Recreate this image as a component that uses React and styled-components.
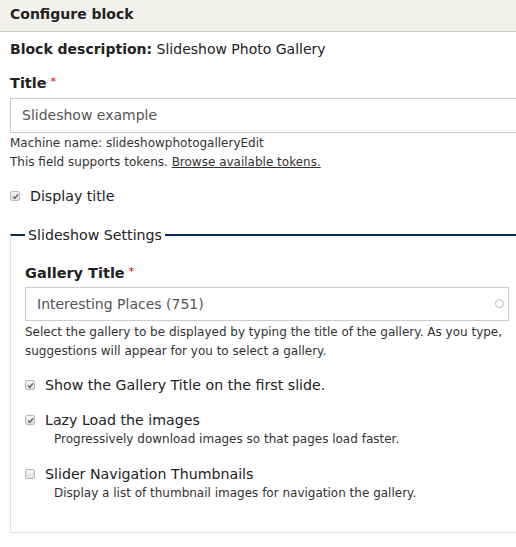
import React from "react";
import styled, { createGlobalStyle } from "styled-components";

const GlobalStyle = createGlobalStyle`
  html, body {
    margin: 0;
    padding: 0;
    background: #fff;
    overflow: hidden;
  }
  body {
    font-family: "DejaVu Sans", Verdana, sans-serif;
    color: #333;
  }
`;

const Page = styled.div`
  width: 540px;
`;

const Header = styled.div`
  height: 31px;
  line-height: 29px;
  padding: 0 10px;
  background: #f2f1ed;
  border-bottom: 1px solid #ccc;
  font-size: 14px;
  font-weight: bold;
  color: #222;
`;

const Body = styled.div`
  padding: 7px 16px 20px 10px;
`;

const Description = styled.div`
  font-size: 14px;
  line-height: 20px;
  color: #222;
  b {
    font-weight: bold;
  }
`;

const Label = styled.div`
  margin-top: ${(p) => p.$top ?? 13}px;
  font-size: 14.5px;
  line-height: 20px;
  font-weight: bold;
  color: #222;
`;

const Required = styled.span`
  color: #e00;
  font-size: 11px;
  font-weight: normal;
  margin-left: 4px;
  vertical-align: 3px;
`;

const TextInput = styled.div`
  position: relative;
  margin-top: ${(p) => p.$top ?? 5}px;
  height: ${(p) => p.$height || 33}px;
  border: 1px solid #ccc;
  padding-left: 11px;
  font-size: 14px;
  line-height: ${(p) => p.$height || 33}px;
  color: #555;
  background: #fff;
`;

const Throbber = styled.span`
  position: absolute;
  right: 4px;
  top: 50%;
  width: 7px;
  height: 7px;
  margin-top: -5px;
  border: 1.5px solid #bbb;
  border-radius: 50%;
`;

const Help = styled.div`
  font-size: 12px;
  line-height: 19px;
  color: #333;
  margin-top: ${(p) => p.$top || 0}px;
  padding-left: ${(p) => p.$indent || 0}px;
  a {
    color: #333;
    text-decoration: underline;
  }
`;

const CheckRow = styled.label`
  display: flex;
  align-items: center;
  margin-top: ${(p) => p.$top ?? 14}px;
  font-size: 14.2px;
  line-height: 20px;
  color: #222;
`;

const Box = styled.span`
  flex: none;
  width: 8px;
  height: 8px;
  margin-right: 10px;
  border: 1px solid #b8b8b8;
  border-radius: 2px;
  background: linear-gradient(#f6f6f6, #dedede);
  display: flex;
  align-items: center;
  justify-content: center;
`;

const Fieldset = styled.fieldset`
  margin: 19px 0 0 0;
  padding: 17px 14px 29px 14px;
  border: 1px solid #e2e2e2;
  border-top: 2px solid #0a2a5c;
  min-width: 0;
`;

const Legend = styled.legend`
  padding: 0 3px;
  margin-left: 0;
  font-size: 14.2px;
  line-height: 20px;
  color: #222;
`;

function Checkbox({ checked }) {
  return (
    <Box>
      {checked && (
        <svg width="7" height="7" viewBox="0 0 7 7">
          <path d="M1 3.6 L2.8 5.3 L6 1.4" fill="none" stroke="#555" strokeWidth="1.3" />
        </svg>
      )}
    </Box>
  );
}

function Option({ checked, label, help, top }) {
  return (
    <>
      <CheckRow $top={top}>
        <Checkbox checked={checked} />
        {label}
      </CheckRow>
      {help && <Help $indent={29}>{help}</Help>}
    </>
  );
}

export default function App() {
  return (
    <Page>
      <GlobalStyle />
      <Header>Configure block</Header>
      <Body>
        <Description>
          <b>Block description:</b> Slideshow Photo Gallery
        </Description>
        <Label>
          Title<Required>*</Required>
        </Label>
        <TextInput $height={33}>Slideshow example</TextInput>
        <Help $top={1}>Machine name: slideshowphotogalleryEdit</Help>
        <Help>
          This field supports tokens. <a href="#tokens">Browse available tokens.</a>
        </Help>
        <Option checked label="Display title" top={14} />

        <Fieldset>
          <Legend>Slideshow Settings</Legend>
          <Label $top={0}>
            Gallery Title<Required>*</Required>
          </Label>
          <TextInput $top={4} $height={32}>
            Interesting Places (751)
            <Throbber />
          </TextInput>
          <Help $top={2}>
            Select the gallery to be displayed by typing the title of the gallery. As you type,
            suggestions will appear for you to select a gallery.
          </Help>
          <Option checked label="Show the Gallery Title on the first slide." top={14} />
          <Option
            checked
            label="Lazy Load the images"
            help="Progressively download images so that pages load faster."
            top={15}
          />
          <Option
            label="Slider Navigation Thumbnails"
            help="Display a list of thumbnail images for navigation the gallery."
            top={15}
          />
        </Fieldset>
      </Body>
    </Page>
  );
}
